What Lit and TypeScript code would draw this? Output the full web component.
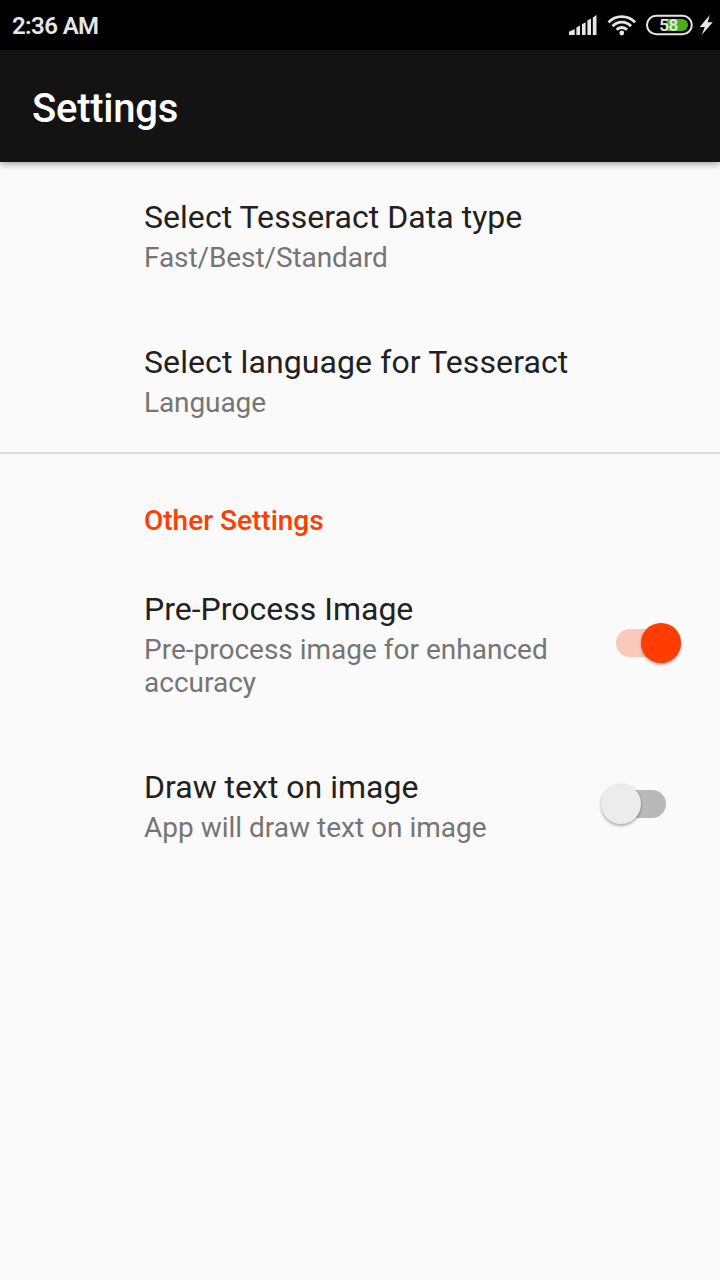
import { LitElement, html, css } from "lit";
import { customElement, property } from "lit/decorators.js";

@customElement("toggle-switch")
class ToggleSwitch extends LitElement {
  @property({ type: Boolean }) on = false;
  static styles = css`
    :host { display: block; flex: none; width: 80px; height: 40px; }
    .box { display: grid; grid-template-columns: 15px 50px 15px; align-items: center; height: 40px; }
    .track { grid-area: 1 / 2; height: 28px; border-radius: 14px; background: #b9b9b9; }
    .thumb { grid-area: 1 / 1 / 2 / 4; justify-self: start; width: 40px; height: 40px; border-radius: 50%;
      background: #ececec; box-shadow: 0 2px 3px rgba(0,0,0,.28), 0 0 2px rgba(0,0,0,.12); }
    .on .track { background: #fac9ba; }
    .on .thumb { justify-self: end; background: #ff3d00; }
  `;
  render() {
    return html`<div class="box ${this.on ? "on" : ""}"><div class="track"></div><div class="thumb"></div></div>`;
  }
}

@customElement("pref-row")
class PrefRow extends LitElement {
  @property() heading = "";
  @property() summary = "";
  static styles = css`
    :host { display: flex; align-items: center; justify-content: space-between; box-sizing: border-box; padding-left: 144px; }
    .text { width: 426px; padding: 36px 0 33px; }
    .title { font-size: 32px; line-height: 38px; color: #212121; white-space: nowrap; letter-spacing: var(--title-tracking, 0); }
    .summary { margin-top: 5px; font-size: 28px; line-height: 33px; color: #757575; letter-spacing: var(--summary-tracking, 0); }
  `;
  render() {
    return html`<div class="text"><div class="title">${this.heading}</div><div class="summary">${this.summary}</div></div><slot></slot>`;
  }
}

@customElement("app-root")
class AppRoot extends LitElement {
  static styles = css`
    :host { display: block; width: 720px; height: 1280px; background: #fafafa; font-family: Roboto, sans-serif; overflow: hidden; }
    .status { display: flex; justify-content: space-between; height: 50px; background: #000; color: #e6e6e6; }
    .time { padding-left: 12px; font-size: 24px; line-height: 53px; font-weight: 600; letter-spacing: -0.6px; }
    .icons { display: block; }
    .pct { font: 600 17px Roboto, sans-serif; fill: #e6e6e6; letter-spacing: -0.3px; }
    .bar { height: 112px; box-sizing: border-box; padding-left: 32px; background: #131313; color: #fff; font-size: 40px;
      line-height: 118px; font-weight: 500; letter-spacing: -0.25px; box-shadow: 0 2px 7px rgba(0,0,0,.38); }
    .divider { height: 2px; background: #dcdcdc; }
    .category { padding: 50px 0 17px 144px; font-size: 28px; line-height: 33px; font-weight: 500; color: #ff3d00; }
    .data { --title-tracking: 0.04px; --summary-tracking: -0.09px; }
    .language { --title-tracking: 0.1px; --summary-tracking: -0.1px; }
    .switch { margin-right: 39px; }
    .raised { margin-bottom: 1px; }
  `;
  render() {
    return html`
      <div class="status">
        <div class="time">2:36 AM</div>
        <svg class="icons" width="160" height="50" viewBox="0 0 160 50">
          <g fill="#e6e6e6">
            <path d="M9 35V31.7L14.7 29V35zM16.4 35V27.5L20 25.6V35zM22 35V24.2L25.6 22.3V35zM27.4 35V20.6L31 18.6V35zM32.8 35V17.4L36.5 15V35z"/>
            <circle cx="61.8" cy="33" r="2.4"/>
            <path d="M149.7 15L139.7 27H144.8L141.7 35L152.7 22.3H147.7z"/>
          </g>
          <path fill="none" stroke="#e6e6e6" stroke-width="2.8"
            d="M48.5 22.4A18 18 0 0 1 75.1 22.4M52.6 26.2A12.4 12.4 0 0 1 71 26.2M56.6 29.8A7 7 0 0 1 67 29.8"/>
          <rect x="87" y="15.8" width="44.8" height="18.4" rx="9.2" fill="none" stroke="#e6e6e6" stroke-width="2"/>
          <path d="M106.5 19H122A6 6 0 0 1 122 31H106.5z" fill="#4caf1a"/>
          <text class="pct" x="99.2" y="31">58</text>
        </svg>
      </div>
      <div class="bar">Settings</div>
      <pref-row class="data" heading="Select Tesseract Data type" summary="Fast/Best/Standard"></pref-row>
      <pref-row class="language" heading="Select language for Tesseract" summary="Language"></pref-row>
      <div class="divider"></div>
      <div class="category">Other Settings</div>
      <pref-row heading="Pre-Process Image" summary="Pre-process image for enhanced accuracy"><toggle-switch class="switch" on></toggle-switch></pref-row>
      <pref-row heading="Draw text on image" summary="App will draw text on image"><toggle-switch class="switch raised"></toggle-switch></pref-row>
    `;
  }
}
